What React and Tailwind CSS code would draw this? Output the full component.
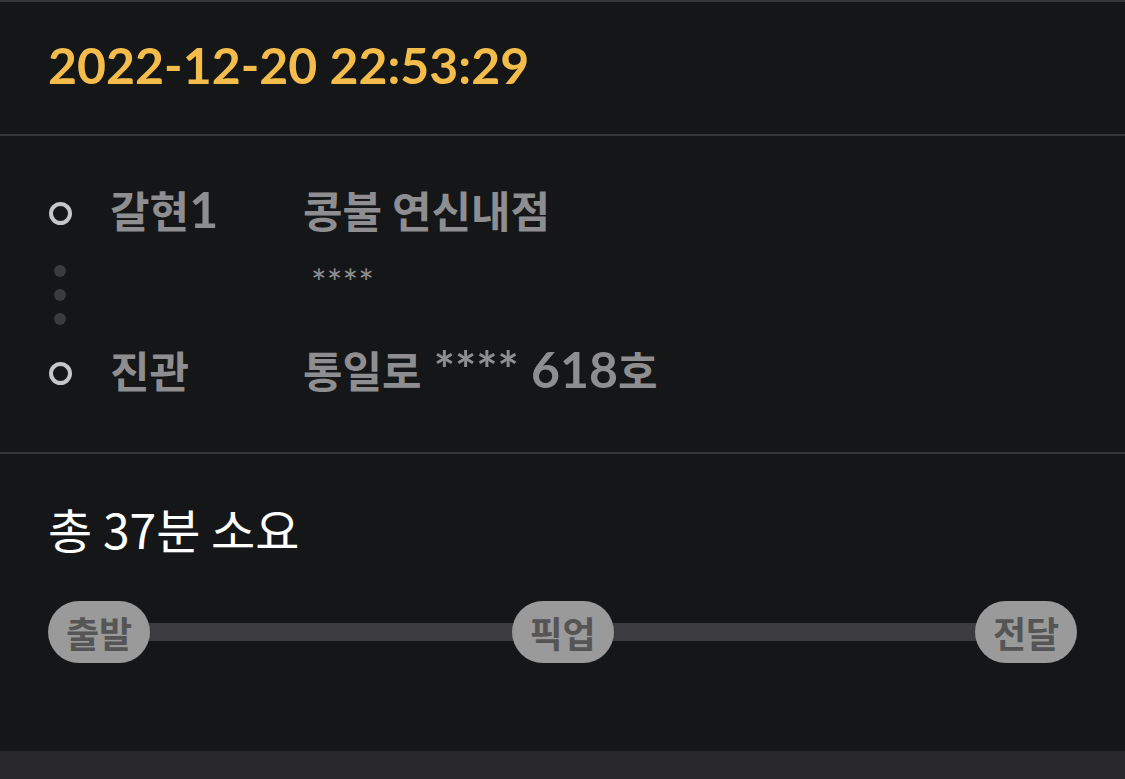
const lato = "font-['Lato','Noto_Sans_CJK_KR',sans-serif]"
const kr = "font-['Noto_Sans_CJK_KR',sans-serif]"

const stops = ['출발', '픽업', '전달']

function Ring() {
  return <div className="w-[23px] h-[23px] rounded-full border-[4px] border-[#c6c6c8] shrink-0" />
}

function Dot() {
  return <div className="w-[12px] h-[12px] rounded-full bg-[#3a3a3f]" />
}

// Korean glyphs sit a bit smaller than the Latin digits in the original
function Ko({ children }) {
  return <span className={`${kr} text-[43px]`}>{children}</span>
}

export default function App() {
  return (
    <div className="w-[1125px] h-[779px] bg-[#151618] flex flex-col overflow-hidden">
      {/* header */}
      <div className="border-t-[2px] border-[#36363a] h-[134px] flex items-center px-[48px] pb-[6px]">
        <span className={`${lato} text-[50px] font-bold text-[#f4bc4b] leading-none`}>
          2022-12-20 22:53:29
        </span>
      </div>

      {/* route */}
      <div className={`${lato} border-t-[2px] border-[#36363a] pt-[53px] pb-[55px] pl-[48px] flex flex-col`}>
        <div className="flex items-center h-[48px]">
          <div className="w-[24px] flex justify-center"><Ring /></div>
          <div className="w-[193px] ml-[38px] pb-[8px] text-[50px] leading-[48px] font-bold text-[#8e8e90] whitespace-nowrap">
            <Ko>갈현</Ko>1
          </div>
          <div className="pb-[8px] text-[50px] leading-[48px] font-bold text-[#8e8e90] whitespace-nowrap">
            <Ko>콩불 연신내점</Ko>
          </div>
        </div>
        <div className="flex h-[112px]">
          <div className="w-[24px] flex flex-col items-center gap-[12px] pt-[28px]">
            <Dot />
            <Dot />
            <Dot />
          </div>
          <div className="ml-[231px] pl-[8px] pt-[26px] text-[37px] leading-none text-[#8e8e90]">****</div>
        </div>
        <div className="flex items-center h-[48px]">
          <div className="w-[24px] flex justify-center"><Ring /></div>
          <div className="w-[193px] ml-[38px] pb-[8px] text-[50px] leading-[48px] font-bold text-[#8e8e90] whitespace-nowrap">
            <Ko>진관</Ko>
          </div>
          <div className="pb-[8px] text-[50px] leading-[48px] font-bold text-[#8e8e90] whitespace-nowrap">
            <Ko>통일로</Ko> **** 618<Ko>호</Ko>
          </div>
        </div>
      </div>

      {/* duration */}
      <div className="border-t-[2px] border-[#36363a] flex-1 px-[48px] pt-[50px]">
        <div className={`${kr} text-[48px] text-white leading-none`}>총 37분 소요</div>
        <div className="relative mt-[49px] h-[62px] flex items-center justify-between">
          <div className="absolute left-[20px] right-[20px] top-[22px] h-[18px] bg-[#3c3b40]" />
          {stops.map((s) => (
            <div
              key={s}
              className={`${kr} relative w-[102px] h-[62px] rounded-full bg-[#9a9a9a] flex items-center justify-center text-[36px] font-bold text-[#555555]`}
            >
              {s}
            </div>
          ))}
        </div>
      </div>

      <div className="h-[28px] bg-[#28282d]" />
    </div>
  )
}
